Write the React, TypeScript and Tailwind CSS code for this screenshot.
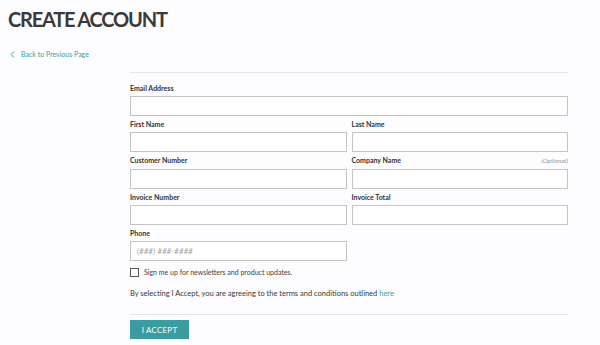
const Field = ({label, optional, placeholder}: {label: string; optional?: boolean; placeholder?: string}) => (
  <div className="flex flex-col">
    <div className="flex justify-between items-center h-[8px] mb-[4px]">
      <span className="text-[7px] font-bold text-[#333]">{label}</span>
      {optional && <span className="text-[6.5px] italic text-[#999]">(Optional)</span>}
    </div>
    <div className="h-[20px] border border-[#c4c4c4] bg-white flex items-center px-[6px]">
      {placeholder && <span className="text-[7.5px] italic text-[#999] tracking-[0.3px]">{placeholder}</span>}
    </div>
  </div>
);

export default function App() {
  return (
    <div className="w-[600px] h-[345px] bg-[#fdfcfe] overflow-hidden" style={{fontFamily: 'Lato, "Noto Sans", sans-serif'}}>
      <h1 className="pl-[8px] pt-[7px] text-[20px] leading-[24px] font-bold text-[#3a3a3a] tracking-[-1.2px]">CREATE ACCOUNT</h1>
      <div className="flex items-center gap-[6px] pl-[10px] mt-[18px] h-[10px] text-[#3c9ea2]">
        <svg width="5" height="7" viewBox="0 0 5 7" fill="none" stroke="currentColor" strokeWidth="1">
          <path d="M4 0.5L1 3.5L4 6.5" />
        </svg>
        <span className="text-[7px]">Back to Previous Page</span>
      </div>
      <div className="ml-[130px] w-[438px] mt-[13px]">
        <div className="h-px bg-[#e6e6e6]" />
        <div className="mt-[11px] grid grid-cols-2 gap-x-[5px] gap-y-[4.3px]">
          <div className="col-span-2">
            <Field label="Email Address" />
          </div>
          <Field label="First Name" />
          <Field label="Last Name" />
          <Field label="Customer Number" />
          <Field label="Company Name" optional />
          <Field label="Invoice Number" />
          <Field label="Invoice Total" />
          <Field label="Phone" placeholder="(###) ###-####" />
        </div>
        <div className="flex items-center gap-[5px] mt-[7px] h-[9px]">
          <div className="w-[9px] h-[9px] border border-[#555] bg-white" />
          <span className="text-[7px] text-[#444]">Sign me up for newsletters and product updates.</span>
        </div>
        <p className="mt-[11px] text-[7.5px] leading-[12px] text-[#3a3a3a]">
          By selecting I Accept, you are agreeing to the terms and conditions outlined{' '}
          <span className="text-[#3c9ea2]">here</span>
        </p>
        <div className="h-px bg-[#e6e6e6] mt-[14px]" />
        <button className="mt-[5px] w-[59px] h-[19px] bg-[#3a9ca0] text-white text-[8px] tracking-[0.2px] flex items-center justify-center">
          I ACCEPT
        </button>
      </div>
    </div>
  );
}
